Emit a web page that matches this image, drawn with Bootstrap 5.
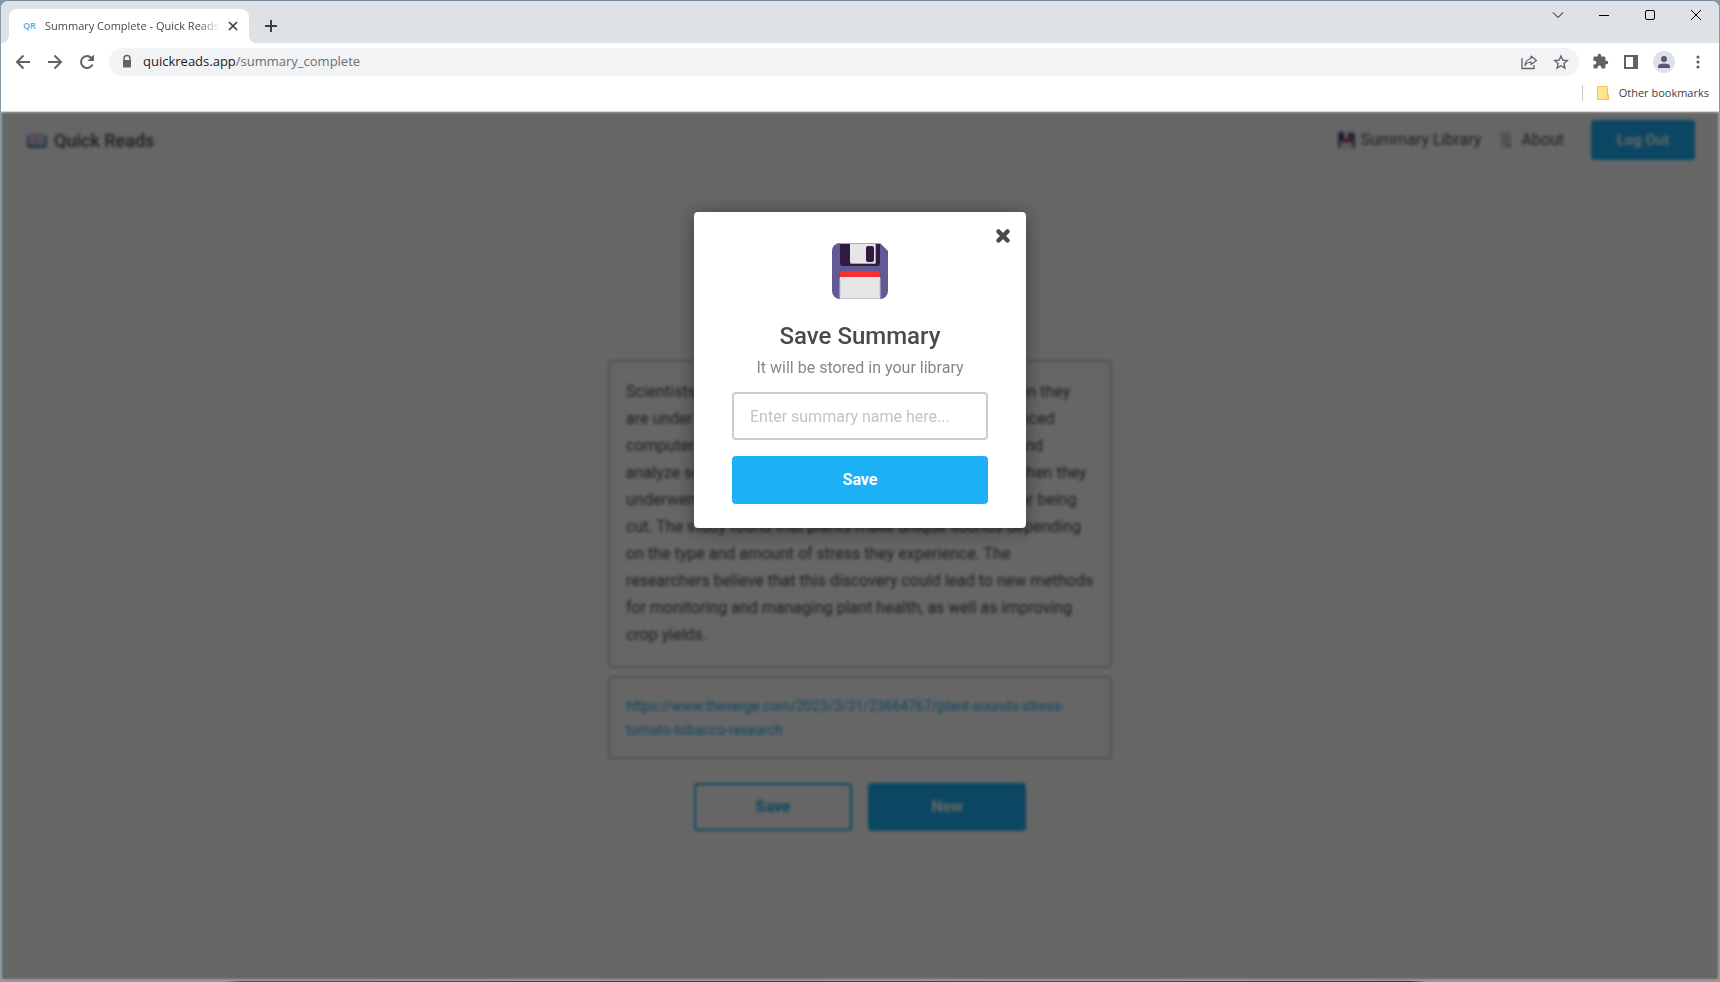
<!DOCTYPE html>
<html lang="en">
<head>
<meta charset="utf-8">
<meta name="viewport" content="width=device-width, initial-scale=1">
<title>Summary Complete - Quick Reads</title>
<link href="https://cdn.jsdelivr.net/npm/bootstrap@5.3.0/dist/css/bootstrap.min.css" rel="stylesheet">
<style>
  :root { --brand: #1db0f7; --ui: "Open Sans", "Noto Sans", sans-serif; --page: Roboto, sans-serif; }
  body { background: linear-gradient(90deg, #7e99b0 0 13%, #2d5b91 14%, #2f3f6b 40%, #2b4f94 64%, #33384f 82%, #8a98a4 83% 100%); font-family: var(--page); }
  .browser { padding: 1px; height: 100vh; }
  .browser-frame { background: #fff; border: 1px solid #8799a5; border-top-color: #73899b; border-bottom-color: #999; border-radius: 8px 8px 0 0; margin: -1px -1px 0; overflow: hidden; }
  svg { display: block; flex: none; }
  .icon-btn { border: 0; background: none; padding: 0; line-height: 0; color: #5f6368; }

  .tab-strip { background: #dee1e6; height: 42px; padding: 8px 0 0 8px; font-family: var(--ui); }
  .tab-page { background: #fff; border-radius: 8px 8px 0 0; width: 240px; height: 34px; padding: 0 11px 0 14px; position: relative; }
  .tab-page::before, .tab-page::after { content: ""; position: absolute; bottom: 0; width: 8px; height: 8px; }
  .tab-page::before { right: 100%; background: radial-gradient(circle at 0 0, transparent 8px, #fff 8px); }
  .tab-page::after { left: 100%; background: radial-gradient(circle at 100% 0, transparent 8px, #fff 8px); }
  .favicon { color: #3fb4e8; font: 600 9px/16px "Open Sans", sans-serif; width: 22px; flex: none; }
  .tab-title { font-size: 11px; color: #45474a; white-space: nowrap; overflow: hidden; -webkit-mask-image: linear-gradient(90deg, #000 88%, transparent 100%); mask-image: linear-gradient(90deg, #000 88%, transparent 100%); }
  .win-controls { gap: 30px; padding-right: 15px; margin-top: -8px; height: 28px; }
  .win-controls .icon-btn { color: #000; }

  .toolbar { height: 37px; padding: 0 13px 0 14px; font-family: var(--ui); }
  .nav-keys { gap: 16px; width: 94px; }
  .address { background: #f1f3f4; border-radius: 14px; height: 28px; padding: 0 10px; }
  .address-text { font-size: 13px; color: #6b6e72; }
  .address-text b { font-weight: 400; color: #202124; }
  .tool-keys { gap: 11px; padding-left: 13px; }
  .avatar { width: 22px; height: 22px; border-radius: 50%; background: #dee1e6; }
  .bookmarks { height: 32px; padding: 0 10px 5px 0; font: 11px/16px var(--ui); color: #3c4043; border-bottom: 1px solid #d5d5d5; }
  .bookmark-rule { width: 1px; height: 16px; background: #c9ccd0; }

  .page-view { background: #fff; color: #4a4a4a; }
  .site-nav, .summary { filter: blur(1px); }
  .site-nav { height: 56px; padding: 0 24px 0 26px; }
  .brand-name { font-size: 18px; font-weight: 500; gap: 7px; color: #4a4a4a; text-decoration: none; }
  .site-link { color: #4a4a4a; font-size: 16px; gap: 6px; text-decoration: none; }
  .action { border: 2px solid var(--brand); border-radius: 4px; background: var(--brand); color: #fff; font-size: 16px; font-weight: 700; height: 48px; padding: 0; }
  .action-outline { background: none; color: var(--brand); }
  .action-logout { width: 104px; height: 40px; margin-left: 27px; font-size: 15px; }
  .summary { width: 504px; max-width: 100%; padding-top: 192px; }
  .panel { border: 2px solid #ccc; border-radius: 4px; padding: 16px; }
  .panel-text { font-size: 16px; line-height: 27px; height: 308px; }
  .panel-link { font-size: 14px; line-height: 24px; height: 83px; }
  .panel-link a { color: var(--brand); text-decoration: none; }
  .summary-actions .action { width: 158px; }

  .scrim { position: absolute; inset: 0; background: rgba(0,0,0,.6); backdrop-filter: blur(1px); padding-top: 100px; box-shadow: inset 0 0 3px rgba(255,255,255,.7); }
  .save-box { position: relative; width: 332px; margin: 0 auto; padding: 31px 38px 24px; background: #fff; border-radius: 4px; box-shadow: 0 2px 20px rgba(0,0,0,.4); }
  .save-close { position: absolute; top: 16px; right: 15px; color: #4a4a4a; }
  .save-title { font-size: 24px; line-height: 32px; font-weight: 500; color: #4a4a4a; margin: 21px 0 4px; }
  .save-note { font-size: 16px; line-height: 24px; color: #888; margin: 0 0 12px; }
  .save-field { height: 48px; border: 2px solid #ccc; border-radius: 4px; padding: 0 16px; font-size: 16px; box-shadow: none; }
  .save-field::placeholder { color: #c4c4c4; }
</style>
</head>
<body>
<svg width="0" height="0" class="position-absolute" aria-hidden="true">
  <symbol id="floppy" viewBox="0 0 56 56">
    <path d="M8 0H48L56 8V48a8 8 0 0 1-8 8H8a8 8 0 0 1-8-8V8a8 8 0 0 1 8-8z" fill="#635994"/>
    <path d="M8 0H48V20a3 3 0 0 1-3 3H11a3 3 0 0 1-3-3z" fill="#321b41"/>
    <path d="M18 0H44V19a2 2 0 0 1-2 2H20a2 2 0 0 1-2-2z" fill="#e6e6e6"/>
    <path d="M8 .5H48M43.500 1v18q0 1.500-1.500 1.500H20q-1.500 0-1.500-1.500" fill="none" stroke="#aaa3ba"/>
    <rect x="34" y="3" width="8" height="16" rx="2" fill="#321b41"/>
    <path d="M8 34v-3a3 3 0 0 1 3-3h34a3 3 0 0 1 3 3v3z" fill="#f92f2f"/>
    <path d="M8 34h40v22H8z" fill="#e6e6e6"/>
    <path d="M8 35v20.500h40V35" fill="none" stroke="#c9c5d6"/>
  </symbol>
</svg>
<div class="browser d-flex flex-column">
  <div class="browser-frame d-flex flex-column flex-grow-1">
    <header>
      <div class="tab-strip d-flex">
        <div class="tab-page d-flex align-items-center">
          <span class="favicon">QR</span>
          <span class="tab-title flex-grow-1">Summary Complete - Quick Reads</span>
          <button class="icon-btn ms-2" aria-label="Close tab"><svg width="10" height="10" viewBox="0 0 10 10"><path d="M1 1l8 8M9 1l-8 8" stroke="#3c4043" stroke-width="1.700"/></svg></button>
        </div>
        <button class="icon-btn ms-3" aria-label="New tab"><svg width="12" height="12" viewBox="0 0 12 12"><path d="M6 0v12M0 6h12" stroke="#3c4043" stroke-width="2"/></svg></button>
        <div class="win-controls d-flex align-items-center ms-auto">
          <button class="icon-btn" aria-label="Search tabs"><svg width="16" height="16" viewBox="0 0 16 16"><path d="M3 5.500l5 5 5-5" fill="none" stroke="currentColor"/></svg></button>
          <button class="icon-btn" aria-label="Minimize"><svg width="16" height="16" viewBox="0 0 16 16"><path d="M3 8.500h10" stroke="currentColor"/></svg></button>
          <button class="icon-btn" aria-label="Maximize"><svg width="16" height="16" viewBox="0 0 16 16"><rect x="3.500" y="3.500" width="9" height="9" rx="1.500" fill="none" stroke="currentColor"/></svg></button>
          <button class="icon-btn" aria-label="Close"><svg width="16" height="16" viewBox="0 0 16 16"><path d="M3 3l10 10M13 3L3 13" stroke="currentColor"/></svg></button>
        </div>
      </div>
      <div class="toolbar d-flex align-items-center">
        <div class="nav-keys d-flex">
          <button class="icon-btn" aria-label="Back"><svg width="16" height="16" viewBox="0 0 16 16"><path d="M15 8H2M8.500 1.500L2 8l6.500 6.500" fill="none" stroke="currentColor" stroke-width="2"/></svg></button>
          <button class="icon-btn" aria-label="Forward"><svg width="16" height="16" viewBox="0 0 16 16"><path d="M1 8h13M7.500 1.500L14 8l-6.500 6.500" fill="none" stroke="currentColor" stroke-width="2"/></svg></button>
          <button class="icon-btn" aria-label="Reload"><svg width="16" height="16" viewBox="0 0 16 16"><path d="M13.500 10.500A6 6 0 1 1 12.500 4" fill="none" stroke="currentColor" stroke-width="2"/><path d="M15 .5V7H8.500z" fill="currentColor"/></svg></button>
        </div>
        <div class="address d-flex align-items-center flex-grow-1">
          <svg width="16" height="16" viewBox="0 0 16 16"><path d="M5 7V4.500a3 3 0 0 1 6 0V7" fill="none" stroke="#5f6368" stroke-width="1.500"/><rect x="4" y="6" width="8" height="7.500" rx="1" fill="#5f6368"/></svg>
          <span class="address-text ms-2"><b>quickreads.app</b>/summary_complete</span>
          <div class="d-flex ms-auto gap-3">
            <button class="icon-btn" aria-label="Share"><svg width="16" height="16" viewBox="0 0 16 16"><path d="M1 4v10.500h12V11" fill="none" stroke="currentColor" stroke-width="1.300"/><path d="M10 2l5.500 4.500L10 10.500V8Q6 8 4 11.500 4.500 5.500 10 4.500z" fill="none" stroke="currentColor" stroke-width="1.200" stroke-linejoin="round"/></svg></button>
            <button class="icon-btn" aria-label="Bookmark this tab"><svg width="16" height="16" viewBox="0 0 16 16"><path d="M8 2l1.800 4.200 4.500.4-3.400 3 1 4.400L8 11.700 4.100 14l1-4.400-3.400-3 4.500-.4z" fill="none" stroke="currentColor" stroke-width="1.400"/></svg></button>
          </div>
        </div>
        <div class="tool-keys d-flex align-items-center">
          <button class="icon-btn" aria-label="Extensions"><svg width="17" height="17" viewBox="0 0 24 24"><path d="M20.500 11H19V7a2 2 0 0 0-2-2h-4V3.500a2.500 2.500 0 0 0-5 0V5H4a2 2 0 0 0-2 2v3.800h1.500a2.700 2.700 0 0 1 0 5.400H2V20a2 2 0 0 0 2 2h3.800v-1.500a2.700 2.700 0 0 1 5.400 0V22H17a2 2 0 0 0 2-2v-4h1.500a2.500 2.500 0 0 0 0-5z" fill="currentColor"/></svg></button>
          <button class="icon-btn ms-1" aria-label="Side panel"><svg width="14" height="14" viewBox="0 0 14 14"><path d="M0 0h14v14H0zM2 2v10h7V2z" fill="currentColor" fill-rule="evenodd"/></svg></button>
          <button class="icon-btn avatar d-flex align-items-center justify-content-center ms-1" aria-label="Profile"><svg width="12" height="12" viewBox="0 0 12 12"><circle cx="6" cy="3" r="3" fill="#535d71"/><path d="M0 12V10q0-2.500 6-2.500T12 10v2z" fill="#535d71"/></svg></button>
          <button class="icon-btn ms-1" aria-label="Menu"><svg width="16" height="16" viewBox="0 0 16 16"><g fill="currentColor"><circle cx="8" cy="3" r="1.600"/><circle cx="8" cy="8" r="1.600"/><circle cx="8" cy="13" r="1.600"/></g></svg></button>
        </div>
      </div>
      <div class="bookmarks d-flex align-items-center justify-content-end">
        <span class="bookmark-rule"></span>
        <svg class="mx-2 ps-1" width="20" height="16" viewBox="0 0 16 16"><path d="M2.500 1.500h10v8h1v5h-11z" fill="#ffe594" stroke="#edc64a"/><path d="M11.500 14v-4h2v4.500" fill="none" stroke="#edc64a"/></svg>
        <span>Other bookmarks</span>
      </div>
    </header>

    <div class="page-view position-relative flex-grow-1">
      <nav class="site-nav d-flex align-items-center">
        <a class="brand-name d-flex align-items-center" href="#">
          <svg width="20" height="16" viewBox="0 0 20 16"><rect y="3" width="20" height="13" rx="2" fill="#3f94c4"/><path d="M2 2q5-2 8 0 3-2 8 0v11H2z" fill="#d3cddd"/><path d="M10 2v11" stroke="#a99bc4"/></svg>
          Quick Reads
        </a>
        <div class="d-flex align-items-center ms-auto gap-3">
          <a class="site-link d-flex align-items-center" href="#"><svg width="17" height="17"><use href="#floppy"/></svg>Summary Library</a>
          <a class="site-link d-flex align-items-center" href="#">
            <svg width="18" height="18" viewBox="0 0 18 18"><path d="M3 1h11v16H4z" fill="#dcd7e4"/><path d="M5 5h7M5 8h7M5 11h4" stroke="#b4abc6"/><path d="M10 13h4v3h-3z" fill="#9586ae"/></svg>
            About</a>
        </div>
        <button class="action action-logout">Log Out</button>
      </nav>
      <main class="summary mx-auto">
        <div class="panel panel-text">Scientists have discovered that plants make sounds when they are under stress. The team used microphones and advanced computer programs to record the various plant sounds and analyze sounds emitted by tomato and tobacco plants when they underwent stress, such as going without water for long or being cut. The study found that plants make unique sounds depending on the type and amount of stress they experience. The researchers believe that this discovery could lead to new methods for monitoring and managing plant health, as well as improving crop yields.</div>
        <div class="panel panel-link mt-2"><a href="#">https://www.theverge.com/2023/3/31/23664767/plant-sounds-stress-tomato-tobacco-research</a></div>
        <div class="summary-actions d-flex justify-content-center gap-3 mt-4">
          <button class="action action-outline">Save</button>
          <button class="action">New</button>
        </div>
      </main>

      <div class="scrim">
        <form class="save-box text-center" role="dialog" aria-labelledby="save-title">
          <button type="button" class="icon-btn save-close" aria-label="Close dialog"><svg width="16" height="16" viewBox="0 0 16 16"><path d="M3.500 3.500l9 9M12.500 3.500l-9 9" stroke="currentColor" stroke-width="4.500" stroke-linecap="round"/></svg></button>
          <svg class="mx-auto" width="56" height="56"><use href="#floppy"/></svg>
          <h1 class="save-title" id="save-title">Save Summary</h1>
          <label class="save-note d-block" for="summary-name">It will be stored in your library</label>
          <input class="form-control save-field" id="summary-name" type="text" placeholder="Enter summary name here...">
          <button type="button" class="action w-100 mt-3">Save</button>
        </form>
      </div>
    </div>
  </div>
</div>
<script src="https://cdn.jsdelivr.net/npm/bootstrap@5.3.0/dist/js/bootstrap.bundle.min.js"></script>
</body>
</html>
